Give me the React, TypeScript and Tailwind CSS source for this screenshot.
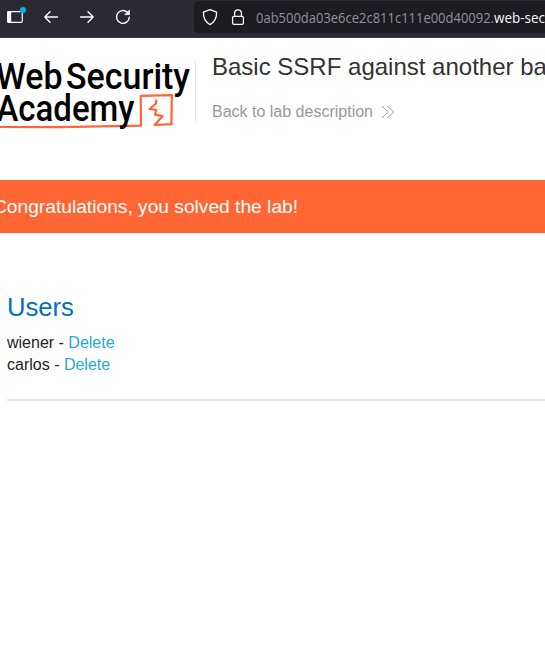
function Toolbar() {
  return (
    <header className="flex h-[38px] w-full shrink-0 items-start overflow-hidden border-b border-[#3d3c44] bg-[#2b2a33]">
      <svg className="h-[37px] w-[194px] shrink-0" viewBox="0 0 194 37" fill="none" stroke="#fbfbfe" strokeWidth="1.4" strokeLinecap="round" strokeLinejoin="round">
        <rect x="7.7" y="11.7" width="14.6" height="10.6" rx="1" strokeWidth="1.2" />
        <path d="M8 12h2.500v10H8z" fill="#fbfbfe" />
        <circle cx="23" cy="10" r="3" fill="#00b3f4" stroke="#1586b5" strokeWidth=".6" />
        <path d="M57.5 17H45M50 11.8L44.8 17l5.2 5.2M80.5 17H93M88 11.8l5.2 5.2-5.2 5.2" />
        <path d="M127.5 12.5A6.4 6.4 0 1 0 129.3 17.2" />
        <path d="M129.4 10.4v4.2h-4.2z" fill="#fbfbfe" strokeWidth=".8" />
      </svg>
      <div className="mt-px flex h-8 w-[360px] shrink-0 items-center rounded-l bg-[#1c1b22]">
        <svg className="h-8 w-[62px] shrink-0" viewBox="194 1 62 32" fill="none" stroke="#fbfbfe" strokeWidth="1.3" strokeLinecap="round" strokeLinejoin="round">
          <path d="M210 9.6L216.6 12.1C216.8 17.5 215 22 210 24.6C205 22 203.200 17.500 203.400 12.100Z" />
          <rect x="232.600" y="16.400" width="10.800" height="7.900" rx="1.300" />
          <path d="M234.600 16v-2.800a3.400 3.400 0 0 1 6.800 0V16" />
        </svg>
        <svg className="h-8 w-[290px] shrink-0 font-['Open_Sans','Noto_Sans',sans-serif] text-[14px]" viewBox="256 1 290 32">
          <text x="256" y="23" fill="#8f8f98" textLength="238" lengthAdjust="spacingAndGlyphs">0ab500da03e6ce2c811c111e00d40092.</text>
          <text x="494" y="23" fill="#fbfbfe" textLength="51" lengthAdjust="spacingAndGlyphs">web-sec</text>
        </svg>
      </div>
    </header>
  );
}

function Logo() {
  return (
    <svg className="h-[90px] w-[195px] shrink-0 font-['Roboto',sans-serif] text-[37px] font-medium" viewBox="0 50 195 90" role="img" aria-label="Web Security Academy">
      <path d="M0 127L60 127.200L141 125.600L140.700 95.800L171.900 95.200L171.400 124.200L154.600 125L162.500 116.200L155 114.600L156.300 110L149.600 109L156 103.500L156.200 99.500" fill="none" stroke="#ff6633" strokeWidth="2.200" strokeLinejoin="round" />
      <text x="-4" y="88.800" textLength="66.500" lengthAdjust="spacingAndGlyphs">Web</text>
      <text x="66" y="88.800" textLength="124" lengthAdjust="spacingAndGlyphs">Security</text>
      <text x="-3.500" y="121" textLength="138" lengthAdjust="spacingAndGlyphs">Academy</text>
    </svg>
  );
}

function UserRow({ name }: { name: string }) {
  return (
    <li>
      {name} - <a className="text-[#29a7df]">Delete</a>
    </li>
  );
}

export default function App() {
  return (
    <div className="flex h-[656px] w-[545px] flex-col overflow-hidden bg-white font-['Liberation_Sans',Arial,sans-serif] text-[#333332]">
      <Toolbar />
      <section className="flex h-[142px] shrink-0 pt-3">
        <Logo />
        <div className="mt-[10px] h-[62px] w-px shrink-0 bg-[#e5e5e5]" />
        <div className="ml-4 shrink-0 whitespace-nowrap">
          <h1 className="mt-[2px] text-[24px] leading-[30px]">Basic SSRF against another back-end system</h1>
          <a className="mt-5 flex items-center text-base leading-5 text-[#999]">
            Back to lab description
            <svg className="mb-px ml-2 h-[14px] w-[14px]" viewBox="0 0 14 14" fill="none" stroke="#999" strokeWidth="1">
              <path d="M1 1l6 6-6 6M6.500 1l6 6-6 6" />
            </svg>
          </a>
        </div>
      </section>
      <section className="flex h-[53px] shrink-0 items-center bg-[#ff6633]">
        <p className="-ml-[7px] whitespace-nowrap text-[19.2px] leading-6 text-white">Congratulations, you solved the lab!</p>
      </section>
      <main className="pl-[7px] pt-[58px]">
        <h2 className="text-[25.6px] leading-8 text-[#0071bc]">Users</h2>
        <ul className="mt-[9px] text-base leading-[22px] text-[#222]">
          <UserRow name="wiener" />
          <UserRow name="carlos" />
        </ul>
        <hr className="mt-[23px] border-0 border-t-2 border-[#e5e5e5]" />
      </main>
    </div>
  );
}
